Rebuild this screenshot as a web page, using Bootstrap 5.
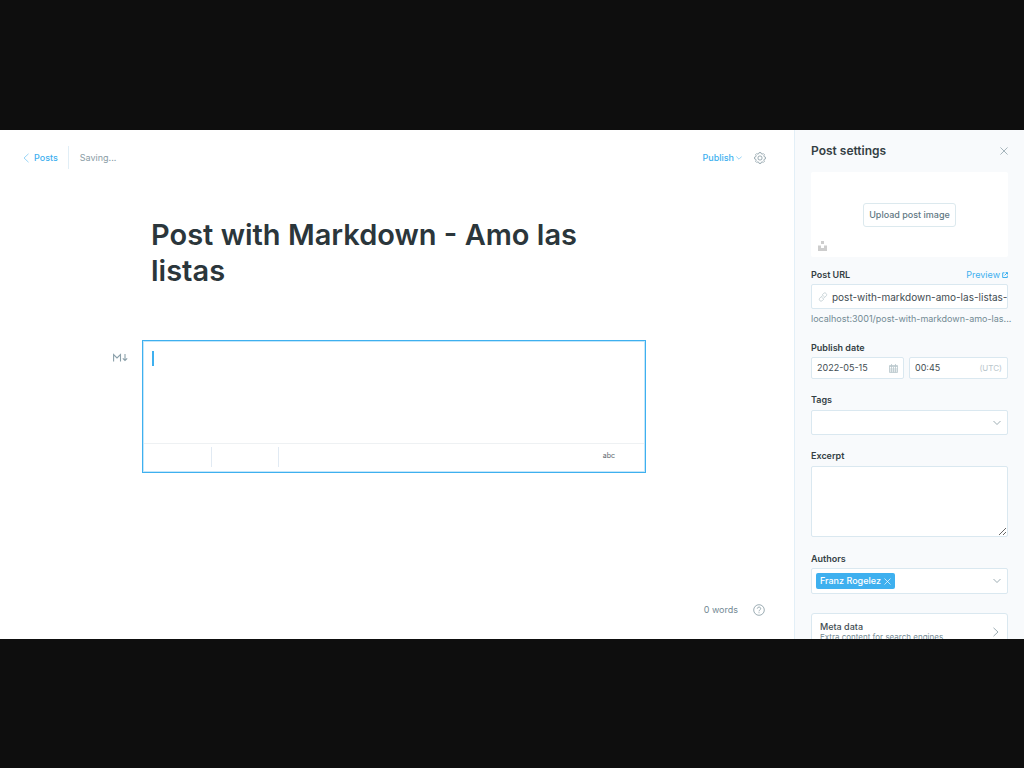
<!DOCTYPE html>
<html lang="en">
<head>
<meta charset="utf-8">
<meta name="viewport" content="width=device-width, initial-scale=1">
<title>Post editor</title>
<link href="https://cdn.jsdelivr.net/npm/bootstrap@5.3.0/dist/css/bootstrap.min.css" rel="stylesheet">
<style>
  :root { --blue: #3eb0ef; --dark: #343f44; --mid: #738a94; --line: #dae8f0; }
  body { background: #0e0e0e; padding: 130px 0 129px; font-family: Inter, sans-serif; font-size: 9px; line-height: 12px; color: var(--dark); }
  a, .blue-text { color: var(--blue); text-decoration: none; }
  svg { display: block; fill: none; stroke: currentColor; flex: none; }
  .muted { color: var(--mid); }
  .app-shell { background: #fff; }
  .top-bar { padding: 16px 28px 0 23px; }
  .posts-link { gap: 5px; padding-right: 10px; height: 23px; border-right: 1px solid #e1eef6; font-weight: 500; }
  .posts-link svg, .publish svg { opacity: .75; }
  .saving { color: #8a9ca5; padding-left: 11px; }
  .plain { border: 0; background: none; padding: 0; }
  .publish { font-weight: 500; gap: 2px; }
  .canvas { width: 100%; max-width: 510px; padding-right: 6px; margin: 48px auto 0; }
  .post-title { font-size: 29px; line-height: 36px; font-weight: 600; color: #2b363b; padding: 0 9px; margin: 0 0 51px; }
  .md-card { border: 1px solid var(--blue); outline: 1px solid #c4e6fa; outline-offset: -2px; }
  .md-mark { right: 100%; top: 12px; margin-right: 14px; color: #8ba0aa; }
  .md-text { height: 102px; border: 0; resize: none; width: 100%; padding: 8px; font-size: 12px; background: none; outline: 0; display: block; }
  .caret { left: 9px; top: 10px; width: 2px; height: 15px; background: var(--blue); }
  .tools { border-top: 1px solid #eef1f3; height: 29px; padding: 3px 30px 5px 1px; }
  .tool-group { width: 68px; height: 20px; border-right: 1px solid #e1eaf3; }
  .tool-group + .tool-group { width: 67px; }
  .abc { font-size: 7px; line-height: 8px; color: #5b676d; padding-bottom: 2px; }
  .status { padding: 0 29px 23px; gap: 15px; }
  .settings { width: 230px; background: #f8fafc; border-left: 1px solid #e3eff7; padding: 13px 16px 0; }
  .settings h2 { font-size: 12px; line-height: 16px; font-weight: 600; margin: 0; }
  .upload { background: #fff; height: 85px; margin: 13px 0 12px; border-radius: 2px; }
  .upload-btn { border: 1px solid #dce9ee; background: #fff; border-radius: 3px; color: #5f7883; font-weight: 500; height: 24px; padding: 0 5px; }
  .unsplash { left: 7px; bottom: 6px; color: #cdcdcd; }
  .lbl { font-weight: 600; font-size: 9px; line-height: 12px; display: block; }
  .preview { gap: 2px; }
  .field { border: 1px solid var(--line); background: #fff; border-radius: 2px; color: #3f4c52; }
  .field input, .field select { border: 0; background: none; outline: 0; min-width: 0; width: 100%; padding: 0; color: inherit; appearance: none; }
  .tall { height: 25px; }
  .url-field { margin: 3px 0 4px; padding: 0 0 0 6px; gap: 4px; font-size: 10px; }
  .url-hint { margin-bottom: 17px; }
  .date-row { gap: 5px; margin: 3px 0 15px; }
  .date-field { height: 22px; padding: 0 5px; flex: 93 0 0; }
  .time-field { flex-grow: 100; }
  .soft { color: #b9c6cc; }
  .utc { font-size: 8px; }
  .picker { padding: 0 6px 0 4px; margin: 4px 0 15px; }
  .authors { height: 26px; margin: 3px 0 19px; }
  .excerpt { height: 71px; width: 100%; display: block; margin: 4px 0 16px; }
  .tag { background: var(--blue); color: #fff; border-radius: 2px; height: 16px; padding: 0 4px; gap: 3px; font-weight: 500; }
  .meta-row { border-radius: 3px; padding: 7px 8px; text-align: left; width: 100%; flex: none; line-height: 11px; }
  .meta-hint { font-size: 8px; }
</style>
<script src="https://cdn.jsdelivr.net/npm/bootstrap@5.3.0/dist/js/bootstrap.bundle.min.js"></script>
</head>
<body class="vh-100 overflow-hidden">
<div class="app-shell d-flex h-100 overflow-hidden">
  <main class="flex-grow-1 d-flex flex-column">
    <header class="top-bar d-flex align-items-center">
      <a href="#" class="posts-link d-flex align-items-center"><svg width="6" height="10" viewBox="0 0 6 10" stroke-width=".7"><path d="M5.500.8 1 5l4.500 4.200"/></svg>Posts</a>
      <span class="saving">Saving...</span>
      <button class="plain publish blue-text d-flex align-items-center ms-auto">Publish<svg width="6" height="4" viewBox="0 0 6 4" stroke-width=".7"><path d="m.3.5 2.700 2.700L5.700.5"/></svg></button>
      <button class="plain muted ms-2 ps-1" aria-label="Settings"><svg width="12" height="12" viewBox="0 0 24 24" stroke-width="1.400" stroke-linejoin="round"><circle cx="12" cy="12" r="4.200"/><path d="M9.800 3.200 10.500 1h3l.7 2.200 2.300 1 2.100-1 2.200 2.200-1.100 2.100 1 2.300 2.300.7v3l-2.300.7-1 2.300 1.100 2.100-2.200 2.200-2.100-1-2.300 1-.7 2.200h-3l-.7-2.200-2.300-1-2.100 1-2.200-2.200 1.100-2.100-1-2.300L1 13.500v-3l2.300-.7 1-2.300-1.100-2.100 2.200-2.200 2.100 1z"/></svg></button>
    </header>
    <div class="canvas">
      <h1 class="post-title">Post with Markdown - Amo las listas</h1>
      <section class="md-card position-relative">
        <svg class="md-mark position-absolute" width="16" height="9" viewBox="0 0 16 9" stroke-width="1.100"><path d="M.6 8.500V1.500L4 5l3.500-3.500v7M12 1v6.500M9.800 5.300l2.200 2.200 2.200-2.200"/></svg>
        <span class="caret position-absolute"></span>
        <textarea class="md-text" aria-label="Markdown"></textarea>
        <div class="tools d-flex align-items-center">
          <div class="tool-group"></div><div class="tool-group"></div>
          <button class="plain abc ms-auto">abc</button>
        </div>
      </section>
    </div>
    <footer class="status muted d-flex justify-content-end align-items-center mt-auto">
      <span>0 words</span>
      <a href="#" class="muted" aria-label="Help"><svg width="12" height="12" viewBox="0 0 12 12" stroke-width=".7"><circle cx="6" cy="6" r="5.300"/><path d="M4.300 4.700c0-2.300 3.500-2.100 3.400 0C7.700 5.900 6 5.900 6 7.300M6 8.300v.9"/></svg></a>
    </footer>
  </main>
  <aside class="settings flex-shrink-0 d-flex flex-column overflow-hidden">
    <div class="d-flex justify-content-between align-items-center">
      <h2>Post settings</h2>
      <button class="plain muted" aria-label="Close"><svg width="8" height="8" viewBox="0 0 9 9" stroke-width=".7"><path d="m.5.5 8 8m0-8-8 8"/></svg></button>
    </div>
    <div class="upload position-relative d-flex align-items-center justify-content-center flex-shrink-0">
      <button class="upload-btn">Upload post image</button>
      <svg class="unsplash position-absolute" width="9" height="10" viewBox="0 0 9 10"><path d="M3 0h3v3H3zM0 4.500h3v2.500h3V4.500h3V10H0z" fill="currentColor" stroke="none"/></svg>
    </div>
    <div class="d-flex justify-content-between">
      <label class="lbl" for="url">Post URL</label>
      <a href="#" class="preview d-flex align-items-center">Preview<svg width="6" height="6" viewBox="0 0 6 6" stroke-width="1"><path d="M2.500.8H.7v4.700h4.600V3.600M3.600.6h1.900v1.900M5.300.7 2.600 3.400"/></svg></a>
    </div>
    <div class="field tall url-field d-flex align-items-center flex-shrink-0">
      <svg class="soft" width="10" height="10" viewBox="0 0 24 24" stroke-width="1.800"><path d="m10 7 4-4c3-3 9 2 6 6l-5 5c-2 2-5 1-6-1m5 4-4 4c-4 3-9-2-6-6l5-5c2-2 5-1 6 1"/></svg>
      <input id="url" type="text" value="post-with-markdown-amo-las-listas-">
    </div>
    <div class="url-hint muted text-nowrap flex-shrink-0">localhost:3001/post-with-markdown-amo-las...</div>
    <label class="lbl" for="date">Publish date</label>
    <div class="date-row d-flex">
      <div class="field date-field d-flex align-items-center">
        <input id="date" type="text" value="2022-05-15">
        <svg width="9" height="9" viewBox="0 0 9 9" class="soft" stroke-width=".8"><path d="M.5 1.500h8v7h-8zM.5 2.500h8M.5 5h8M.5 7h8M2.500 0v8.500M4.500 3v5.500M6.500 0v8.500"/></svg>
      </div>
      <div class="field date-field time-field d-flex align-items-center">
        <input type="text" value="00:45" aria-label="Publish time"><span class="soft utc">(UTC)</span>
      </div>
    </div>
    <label class="lbl" for="tags">Tags</label>
    <div class="field tall picker d-flex align-items-center flex-shrink-0">
      <select id="tags"><option></option></select>
      <svg class="muted" width="8" height="6" viewBox="0 0 8 6" stroke-width=".7"><path d="m.5 1 3.500 3.500L7.500 1"/></svg>
    </div>
    <label class="lbl" for="excerpt">Excerpt</label>
    <textarea id="excerpt" class="field excerpt flex-shrink-0"></textarea>
    <label class="lbl" for="authors">Authors</label>
    <div class="field picker authors d-flex align-items-center flex-shrink-0">
      <span class="tag d-flex align-items-center flex-shrink-0">Franz Rogelez<svg width="7" height="7" viewBox="0 0 7 7" stroke-width=".7"><path d="m.5.500 6 6m0-6-6 6"/></svg></span>
      <select id="authors"><option></option></select>
      <svg class="muted" width="8" height="6" viewBox="0 0 8 6" stroke-width=".7"><path d="m.5 1 3.500 3.500L7.500 1"/></svg>
    </div>
    <button class="field meta-row d-flex align-items-center justify-content-between">
      <span><span class="d-block fw-medium">Meta data</span><span class="meta-hint d-block muted">Extra content for search engines</span></span>
      <svg class="muted" width="6" height="10" viewBox="0 0 6 10" stroke-width=".7"><path d="m.5.800 4.500 4.200L.5 9.200"/></svg>
    </button>
  </aside>
</div>
</body>
</html>
